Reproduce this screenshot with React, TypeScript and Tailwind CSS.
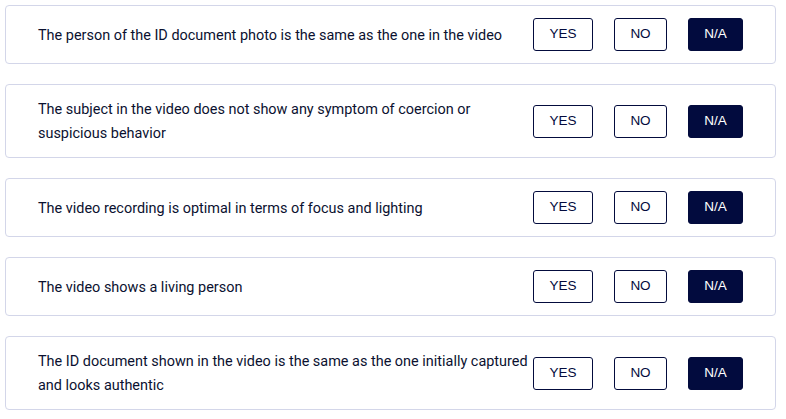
import React from "react";

const items = [
  "The person of the ID document photo is the same as the one in the video",
  "The subject in the video does not show any symptom of coercion or suspicious behavior",
  "The video recording is optimal in terms of focus and lighting",
  "The video shows a living person",
  "The ID document shown in the video is the same as the one initially captured and looks authentic",
];

export default function App() {
  return (
    <div className="w-[786px] h-[419px] bg-white pt-[5px] pl-[5px] overflow-hidden">
      <div className="flex flex-col gap-[20px] w-[771px]">
        {items.map((t) => (
          <div
            key={t}
            className="flex items-center border border-[#d3d6e9] rounded-[4px] px-8 py-3 bg-white"
          >
            <div
              className="w-[495px] shrink-0 text-[14.45px] leading-[24px] text-[#0b1130] translate-y-[1px]"
              style={{ fontFamily: "Roboto, 'Liberation Sans', sans-serif" }}
            >
              {t}
            </div>
            <div
              className="flex items-center gap-[21px] text-[13.5px]"
              style={{ fontFamily: "'Liberation Sans', Arial, sans-serif" }}
            >
              <button className="w-[60px] h-[33px] border border-[#030b3d] rounded-[3px] text-[#030b3d] bg-white">
                YES
              </button>
              <button className="w-[53px] h-[33px] border border-[#030b3d] rounded-[3px] text-[#030b3d] bg-white">
                NO
              </button>
              <button className="w-[55px] h-[33px] border border-[#030b3d] rounded-[3px] text-white bg-[#020b3e]">
                N/A
              </button>
            </div>
          </div>
        ))}
      </div>
    </div>
  );
}
